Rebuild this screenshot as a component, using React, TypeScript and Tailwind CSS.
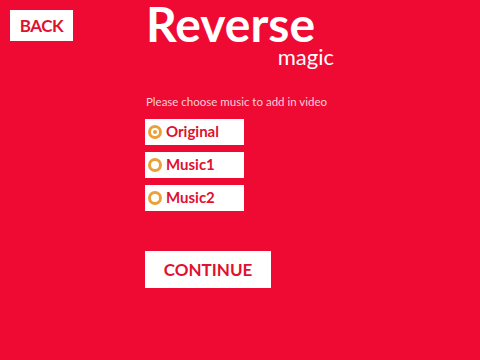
import React from "react";

const options = ["Original", "Music1", "Music2"];

export default function App() {
  const selected = 0;
  return (
    <div
      className="w-[480px] h-[360px] bg-[#ee0a33] flex overflow-hidden"
      style={{ fontFamily: "Lato, 'Open Sans', sans-serif" }}
    >
      <div className="w-[145px] pl-[10px] pt-[10px]">
        <button className="w-[63px] h-[31px] bg-white text-[#e0102f] font-bold text-[17px] leading-none flex items-center justify-center tracking-tight">
          BACK
        </button>
      </div>
      <div className="flex flex-col">
        <div className="flex flex-col w-[190px]">
          <div className="text-white font-bold text-[48px] leading-[44px] mt-[2px] ml-[1px]">Reverse</div>
          <div className="text-white font-normal text-[22px] leading-[22px] self-end mr-[1px]">magic</div>
        </div>
        <div className="text-[#fbd0d8] text-[11.5px] leading-none mt-[28px] ml-[1px]">
          Please choose music to add in video
        </div>
        <div className="flex flex-col gap-[7px] mt-[11px]">
          {options.map((o, i) => (
            <div key={o} className="w-[99px] h-[26px] bg-white flex items-center pl-[3px] gap-[4px]">
              <span className="w-[14px] h-[14px] rounded-full border-[3px] border-[#eaa13a] flex items-center justify-center">
                {i === selected && <span className="w-[4px] h-[4px] rounded-full bg-[#eaa13a]" />}
              </span>
              <span className="text-[#e0102f] font-bold text-[15px] leading-none">{o}</span>
            </div>
          ))}
        </div>
        <button className="mt-[40px] w-[126px] h-[37px] bg-white text-[#e0102f] font-bold text-[17px] leading-none flex items-center justify-center">
          CONTINUE
        </button>
      </div>
    </div>
  );
}
